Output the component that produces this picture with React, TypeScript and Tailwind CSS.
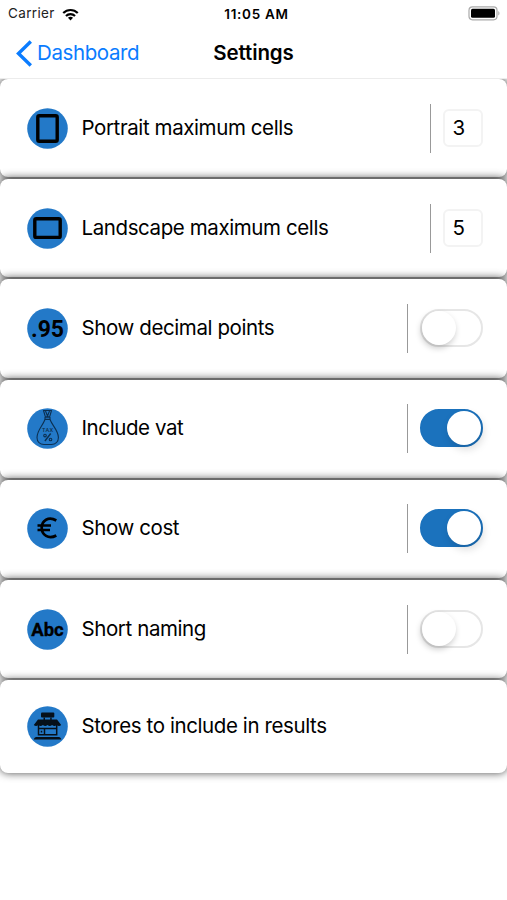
import type { ReactNode } from "react";

const glyphFont = "Roboto, 'Liberation Sans', sans-serif";

function Badge({ children }: { children: ReactNode }) {
  return (
    <svg viewBox="0 0 41 41" className="w-[41px] h-[41px] shrink-0" fill="none" stroke="#000">
      <circle cx="20.5" cy="20.5" r="20.3" fill="#2379c8" stroke="none" />
      {children}
    </svg>
  );
}

const PortraitIcon = () => (
  <Badge>
    <rect x="10.8" y="7.8" width="19.4" height="25.4" rx="1.5" strokeWidth="3.4" />
  </Badge>
);

const LandscapeIcon = () => (
  <Badge>
    <rect x="7.8" y="10.8" width="25.4" height="18.6" rx="1.5" strokeWidth="3.4" />
  </Badge>
);

const DecimalIcon = () => (
  <Badge>
    <text x="20.5" y="28.5" textAnchor="middle" fontFamily={glyphFont} fontSize="23" fontWeight="700" fill="#000" stroke="none" textLength="33">
      .95
    </text>
  </Badge>
);

const VatIcon = () => (
  <Badge>
    <g stroke="#0c2f50" strokeWidth="1.1" strokeLinejoin="round">
      <path d="M16.5 2.5h8l-1.8 6.2h-4.4zM18 9.2h5v2.2h-5zM18.5 3l2 5 2-5" />
      <path d="M18 11.5C15.5 18 10 22.5 10 29.5c0 4.5 3.2 7 7 7h7.4c3.8 0 7-2.5 7-7 0-7-5.9-11.5-8.4-18" />
      <path d="M23.7 25.5l-5.8 7.5" strokeWidth="1.4" />
      <circle cx="18" cy="27.6" r="1.3" />
      <circle cx="23.5" cy="31.5" r="1.3" />
    </g>
    <text x="20.5" y="24" textAnchor="middle" fontFamily={glyphFont} fontSize="5.6" fontWeight="500" fill="#0c2f50" stroke="none" textLength="11">
      TAX
    </text>
  </Badge>
);

const EuroIcon = () => (
  <Badge>
    <path d="M29.3 12.5C21.5 8 14.7 12.7 14.7 19.8s6.8 12 14.6 7.7M10.5 17.5h13.5M10.5 22h12.5" strokeWidth="2.7" />
  </Badge>
);

const AbcIcon = () => (
  <Badge>
    <text x="20.5" y="27" textAnchor="middle" fontFamily={glyphFont} fontSize="18.5" fontWeight="700" fill="#000" stroke="#000" strokeWidth="0.3" textLength="32.5">
      Abc
    </text>
  </Badge>
);

const StoreIcon = () => (
  <Badge>
    <g fill="#06101a" stroke="none">
      <rect x="14" y="6.500" width="13.3" height="5" rx="1" />
      <path d="M16.5 11.5h1.5v3h-1.500zM23.2 11.5h1.500v3h-1.500z" />
      <path d="M11 13.5h19l4.2 5.5q-2.200 1.800-4.500 0q-2.300 1.800-4.600 0q-2.300 1.800-4.600 0q-2.300 1.800-4.600 0q-2.300 1.800-4.600 0q-2.300 1.800-4.500 0z" />
      <path d="M6.8 33.5c.4-1.800 1.200-2.600 2.500-2.600h22.500c1.300 0 2.100.8 2.500 2.600z" />
    </g>
    <path d="M11.500 19v10.500M29.700 19v10.500M17.500 22.500v7M11.500 22.500h18.200M11.500 28.800h18.200M14.500 24.800v1.800" stroke="#06101a" strokeWidth="1.500" />
  </Badge>
);

const Divider = () => <div className="w-[1.5px] h-[49px] bg-[#999]" />;

function NumberField({ value }: { value: number }) {
  return (
    <>
      <Divider />
      <div className="ml-3 w-10 h-[38px] rounded-md border-2 border-[#f3f3f3] pl-[7.5px] flex items-center text-[20.5px]">
        {value}
      </div>
    </>
  );
}

function Toggle({ on }: { on: boolean }) {
  return (
    <>
      <Divider />
      <div
        className={`ml-[12px] mb-px w-[63px] h-[38px] rounded-full border-2 flex items-center ${
          on ? "bg-[#1b72bd] border-[#1b72bd] justify-end" : "bg-white border-[#e6e6e6] justify-start"
        }`}
      >
        <div
          className={`size-[34px] shrink-0 rounded-full bg-white ${
            on ? "shadow-[2px_4px_8px_rgba(0,0,0,0.15)]" : "shadow-[-1px_3px_6px_rgba(0,0,0,0.22)]"
          }`}
        />
      </div>
    </>
  );
}

const rows = [
  { label: "Portrait maximum cells", icon: <PortraitIcon />, control: <NumberField value={3} /> },
  { label: "Landscape maximum cells", icon: <LandscapeIcon />, control: <NumberField value={5} /> },
  { label: "Show decimal points", icon: <DecimalIcon />, control: <Toggle on={false} /> },
  { label: "Include vat", icon: <VatIcon />, control: <Toggle on /> },
  { label: "Show cost", icon: <EuroIcon />, control: <Toggle on /> },
  { label: "Short naming", icon: <AbcIcon />, control: <Toggle on={false} /> },
  { label: "Stores to include in results", icon: <StoreIcon />, control: null },
];

function StatusBar() {
  return (
    <div className="h-7 px-2 grid grid-cols-3 items-center text-[13.5px] leading-none">
      <div className="flex items-center gap-[7px] text-[#222]">
        <span className="tracking-[0.35px]">Carrier</span>
        <svg viewBox="0 0 18 13" className="w-[17px] h-[13px]" fill="none" stroke="#000" strokeWidth="2.3">
          <path d="M1.3 5c4.3-4.3 11.1-4.3 15.4 0M4.2 8c2.7-2.6 6.9-2.6 9.6 0" />
          <path d="M9 12.8 6.3 10c1.5-1.5 3.9-1.5 5.4 0z" fill="#000" stroke="none" />
        </svg>
      </div>
      <span className="text-center font-semibold pl-[6px] pt-px whitespace-nowrap tracking-[0.7px]">11:05 AM</span>
      <svg viewBox="0 0 33 15" className="w-[33px] h-[15px] justify-self-end -mr-[2px] -mt-px">
        <rect x="1" y=".8" width="28" height="13" rx="3.5" fill="none" stroke="#aaa" strokeWidth="1.2" />
        <rect x="3" y="2.8" width="24" height="9" rx="1.5" fill="#000" />
        <path d="M30.3 5v4.6c1.6-.8 1.6-3.8 0-4.6z" fill="#aaa" />
      </svg>
    </div>
  );
}

export default function App() {
  return (
    <div className="w-[507px] h-[900px] overflow-hidden bg-white text-black font-['Inter','Liberation_Sans',sans-serif]">
      <header className="relative z-10 h-[79px] bg-white border-b border-[#ececec]">
        <StatusBar />
        <div className="h-[50px] grid grid-cols-3 items-center">
          <button className="flex items-center pl-4 text-[#0a7cff] text-[20.5px] tracking-[-0.4px]">
            <svg viewBox="0 0 17 27" className="w-[17px] h-[27px] mr-[4px]" fill="none" stroke="currentColor" strokeWidth="3.4">
              <path d="M14.8 1.5 2.5 13.5l12.3 12" />
            </svg>
            Dashboard
          </button>
          <h1 className="text-center font-semibold text-[20.5px] tracking-[-0.1px]">Settings</h1>
        </div>
      </header>
      <main className="flex flex-col gap-[2px]">
        {rows.map((row) => (
          <div
            key={row.label}
            className="relative h-[98.2px] last:h-[93px] pl-[26.5px] pr-6 flex items-center rounded-lg bg-white shadow-[0_0_9px_1px_rgba(0,0,0,0.7)] last:shadow-[0_0_8px_rgba(0,0,0,0.7)]"
          >
            {row.icon}
            <span className="ml-[14px] flex-1 text-[20.5px] tracking-[-0.4px]">{row.label}</span>
            {row.control}
          </div>
        ))}
      </main>
    </div>
  );
}
